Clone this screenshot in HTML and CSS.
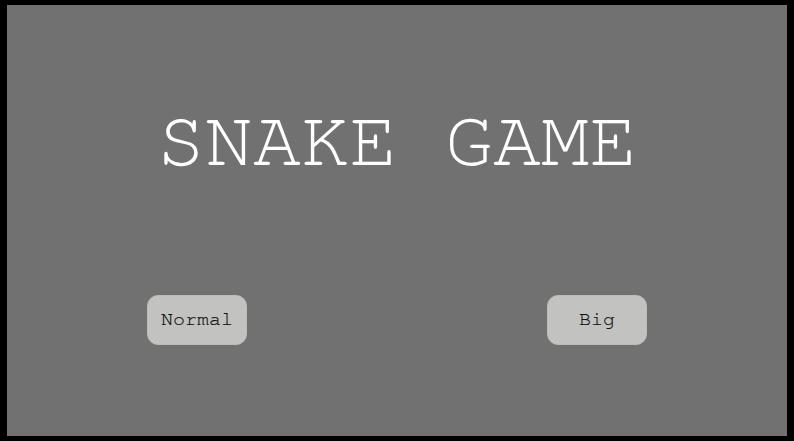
FILE: index.html
```html
<!DOCTYPE html>
<html>
<head>
<meta charset="utf-8">
<link rel="stylesheet" href="styles.css">
</head>
<body>
<div class="screen">
  <h1 class="title">SNAKE GAME</h1>
  <div class="buttons">
    <button class="btn">Normal</button>
    <button class="btn">Big</button>
  </div>
</div>
</body>
</html>
```

FILE: styles.css
```css
html, body {
  margin: 0;
  padding: 0;
  background: #000;
  width: 794px;
  height: 441px;
  overflow: hidden;
}
body {
  padding: 5px 7px 5px 7px;
  box-sizing: border-box;
}
.screen {
  width: 780px;
  height: 431px;
  background: #717171;
  display: flex;
  flex-direction: column;
  align-items: center;
  box-sizing: border-box;
  padding-top: 96px;
}
.title {
  margin: 0;
  font-family: "FreeMono", "Courier New", monospace;
  font-weight: normal;
  font-size: 80px;
  line-height: 1;
  color: #fff;
  letter-spacing: 0;
}
.buttons {
  margin-top: 114px;
  display: flex;
  gap: 300px;
}
.btn {
  width: 100px;
  height: 50px;
  background: #c2c3c1;
  border: 1px solid #b3c3b3;
  border-radius: 11px;
  font-family: "FreeMono", "Courier New", monospace;
  font-size: 20px;
  line-height: 1;
  color: #111;
  -webkit-text-stroke: 0.2px #111;
  padding: 0 0 2px 0;
}
```
